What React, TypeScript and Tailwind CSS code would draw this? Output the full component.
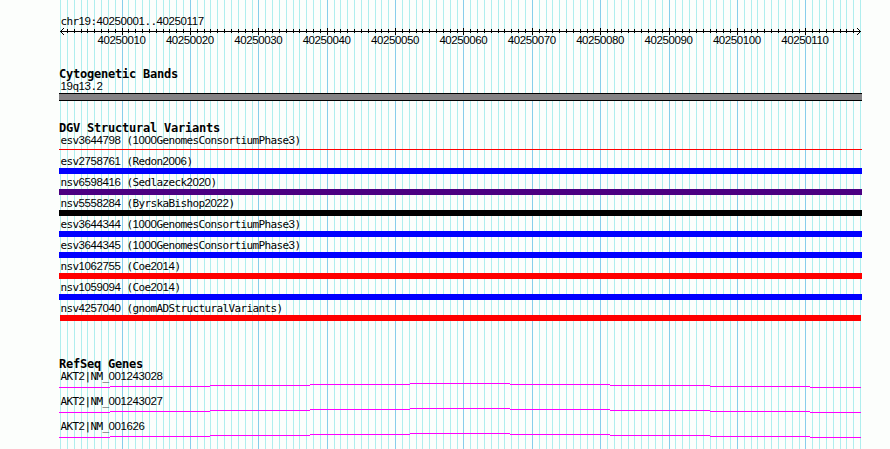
import React from 'react';

const variants = [
  { name: 'esv3644798 (1000GenomesConsortiumPhase3)', bar: 'mt-[2px] mb-[3px] h-px bg-[#ff0000]' },
  { name: 'esv2758761 (Redon2006)', bar: 'h-[6px] bg-[#0000ff]' },
  { name: 'nsv6598416 (Sedlazeck2020)', bar: 'h-[6px] bg-[#4b0082]' },
  { name: 'nsv5558284 (ByrskaBishop2022)', bar: 'h-[6px] bg-black' },
  { name: 'esv3644344 (1000GenomesConsortiumPhase3)', bar: 'h-[6px] bg-[#0000ff]' },
  { name: 'esv3644345 (1000GenomesConsortiumPhase3)', bar: 'h-[6px] bg-[#0000ff]' },
  { name: 'nsv1062755 (Coe2014)', bar: 'h-[6px] bg-[#ff0000]' },
  { name: 'nsv1059094 (Coe2014)', bar: 'h-[6px] bg-[#0000ff]' },
  { name: 'nsv4257040 (gnomADStructuralVariants)', bar: 'mx-px h-[6px] bg-[#ff0000]' },
];

const genes = ['AKT2|NM_001243028', 'AKT2|NM_001243027', 'AKT2|NM_001626'];

// one entry per base, 1-based position -> pixel column
const bases = Array.from({ length: 118 }, (_, i) => ({
  x: Math.floor(60.55 + (i * 800) / 117),
  major: (i + 1) % 10 === 0,
}));

const majorLabels = [
  '40250010', '40250020', '40250030', '40250040', '40250050', '40250060',
  '40250070', '40250080', '40250090', '40250100', '40250110',
];

// x start, x end, y offset of each step of the transcript line
const steps = [
  [0, 51, 4], [51, 151, 3], [151, 251, 2], [251, 351, 1], [351, 451, 0],
  [451, 551, 1], [551, 651, 2], [651, 751, 3], [751, 802, 4],
];

// Digits use a face with an open zero, the rest is monospace on a 6px pitch
const Label: React.FC<{ text: string }> = ({ text }) => (
  <div className="h-[15px] pl-[1.5px] whitespace-pre font-['DejaVu_Sans_Mono',monospace] text-[11px] leading-[17px] tracking-[-0.622px] text-black">
    {text.split(/(\d+)/).map((part, i) =>
      /^\d/.test(part) ? (
        <span key={i} className="font-['Liberation_Sans',sans-serif] text-[11.5px] tracking-[-0.396px]">{part}</span>
      ) : (
        part
      ),
    )}
  </div>
);

const Title: React.FC<{ text: string }> = ({ text }) => (
  <h2 className="h-[10px] whitespace-pre font-['DejaVu_Sans_Mono',monospace] text-[12px] font-bold leading-[13px] tracking-[-0.224px] text-black">
    {text}
  </h2>
);

const Grid = () => (
  <svg className="absolute inset-0" width="890" height="449" shapeRendering="crispEdges">
    {bases.map(({ x, major }) => (
      <rect key={x} x={x} y="0" width="1" height="449" fill={major ? '#87ceeb' : '#afeeee'} />
    ))}
  </svg>
);

const Axis = () => (
  <svg className="block" width="803" height="8" shapeRendering="crispEdges">
    <rect x="1" y="3" width="801" height="1" />
    {bases.slice(1, -1).map(({ x, major }) => (
      <rect key={x} x={x - 59} y={major ? 0 : 1} width="1" height={major ? 7 : 4} />
    ))}
    <path d="M2 2h1v1h-1zM3 1h1v1h-1zM4 0h1v1h-1zM2 4h1v1h-1zM3 5h1v1h-1zM4 6h1v1h-1z" />
    <path d="M800 2h1v1h-1zM799 1h1v1h-1zM798 0h1v1h-1zM800 4h1v1h-1zM799 5h1v1h-1zM798 6h1v1h-1z" />
  </svg>
);

export default function App() {
  return (
    <div className="relative h-[449px] w-[890px] overflow-hidden bg-[#fcfefc]">
      <Grid />
      <div className="relative flex w-[862px] flex-col pl-[59px] pt-[13px]">
        <header className="h-[55px]">
          <Label text="chr19:40250001..40250117" />
          <Axis />
          <div className="flex pl-[29.5px] font-['Liberation_Sans',sans-serif] text-[11.5px] leading-[9px] tracking-[-0.396px] text-black">
            {majorLabels.map((label) => (
              <span key={label} className="w-[68.38px] shrink-0 pl-[9px]">{label}</span>
            ))}
          </div>
        </header>

        <section className="h-[54px]">
          <Title text="Cytogenetic Bands" />
          <Label text="19q13.2" />
          <div className="h-[8px] border-y border-black bg-[#848284]" />
        </section>

        <section className="h-[236px]">
          <Title text="DGV Structural Variants" />
          {variants.map(({ name, bar }) => (
            <div key={name} className="h-[21px]">
              <Label text={name} />
              <div className={bar} />
            </div>
          ))}
        </section>

        <section>
          <Title text="RefSeq Genes" />
          {genes.map((name) => (
            <div key={name} className="h-[25px]">
              <Label text={name} />
              <svg className="block" width="803" height="5" fill="#ff00ff" shapeRendering="crispEdges">
                {steps.map(([from, to, y]) => (
                  <rect key={from} x={from} y={y} width={to - from} height="1" />
                ))}
              </svg>
            </div>
          ))}
        </section>
      </div>
    </div>
  );
}
